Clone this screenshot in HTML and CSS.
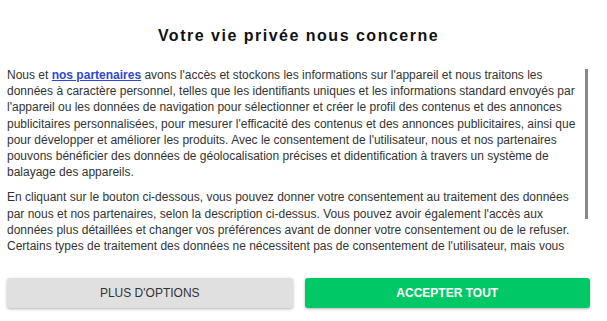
FILE: index.html
```html
<!DOCTYPE html>
<html lang="fr">
<head>
<meta charset="UTF-8">
<meta name="viewport" content="width=device-width, initial-scale=1.0">
<link rel="stylesheet" href="styles.css">
</head>
<body>
<div class="consent">
	<h1 class="title">Votre vie privée nous concerne</h1>
	<div class="text-box">
		<div class="text-content">
			<p class="text">
				Nous et <a class="link" href="#">nos partenaires</a> avons l'accès et stockons les informations sur l'appareil et nous traitons les données à caractère personnel, telles que les identifiants uniques et les informations standard envoyés par l'appareil ou les données de navigation pour sélectionner et créer le profil des contenus et des annonces publicitaires personnalisées, pour mesurer l'efficacité des contenus et des annonces publicitaires, ainsi que pour développer et améliorer les produits. Avec le consentement de l'utilisateur, nous et nos partenaires pouvons bénéficier des données de géolocalisation précises et didentification à travers un système de balayage des appareils.
			</p>
			<p class="text">
				En cliquant sur le bouton ci-dessous, vous pouvez donner votre consentement au traitement des données par nous et nos partenaires, selon la description ci-dessus. Vous pouvez avoir également l'accès aux données plus détaillées et changer vos préférences avant de donner votre consentement ou de le refuser. Certains types de traitement des données ne nécessitent pas de consentement de l'utilisateur, mais vous avez le droit de vous opposer à ce type de traitement. Vos choix s'appliqueront uniquement à ce site.
			</p>
		</div>
		<div class="scrollbar"><div class="thumb"></div></div>
	</div>
	<div class="buttons">
		<button class="btn btn-options">PLUS D'OPTIONS</button>
		<button class="btn btn-accept">ACCEPTER TOUT</button>
	</div>
</div>
</body>
</html>
```

FILE: styles.css
```css
body {
	margin: 0;
	padding: 0;
	background-color: #fff;
	font-family: "Liberation Sans", Arial, sans-serif;
}

.consent {
	display: flex;
	flex-direction: column;
	height: 321px;
	padding: 0 17px 0 7px;
	box-sizing: border-box;
}

.title {
	margin: 0;
	padding: 27px 0 0;
	height: 67px;
	box-sizing: border-box;
	text-align: center;
	font-size: 16px;
	font-weight: bold;
	letter-spacing: 1.5px;
	color: #111;
}

.text-box {
	display: flex;
	height: 188px;
}

.text-content {
	flex: 1;
	overflow: hidden;
}

.scrollbar {
	width: 8px;
	padding: 2px 0 0 3px;
	box-sizing: border-box;
}

.thumb {
	width: 3px;
	height: 150px;
	background-color: #888;
}

.text {
	margin: 0 0 9px;
	font-size: 12px;
	line-height: 16.2px;
	color: #333;
}

.link {
	color: #3046d8;
	font-weight: bold;
}

.buttons {
	display: flex;
	gap: 12px;
	margin-top: 23px;
}

.btn {
	flex: 1;
	height: 30px;
	border: none;
	border-radius: 3px;
	font-family: "Liberation Sans", Arial, sans-serif;
	font-size: 12px;
	box-shadow: 0 1px 3px rgba(0, 0, 0, 0.3);
	cursor: pointer;
}

.btn-options {
	background-color: #e0e0e0;
	color: #333;
}

.btn-accept {
	background-color: #00c866;
	color: #fff;
	font-weight: bold;
}
```
